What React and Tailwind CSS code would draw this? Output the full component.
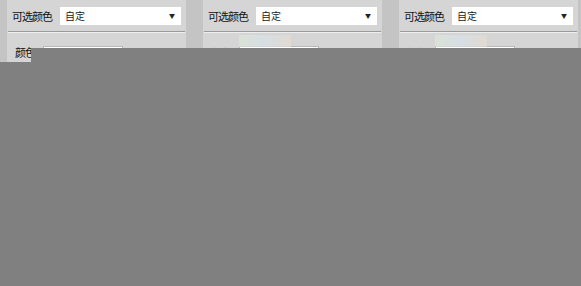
import React from 'react';

const panels = [
  { id: 1, swatch: 'bg-gradient-to-r from-[#e8a0a8] to-[#f4d0d4]', fill: 'w-[12px]', label: true, glow: false },
  { id: 2, swatch: 'bg-gradient-to-r from-[#7fc89a] via-[#6aa8d8] to-[#5b9fd6]', fill: 'w-[62px]', label: false, glow: true },
  { id: 3, swatch: 'bg-gradient-to-r from-[#2e8a78] via-[#3b8fb0] to-[#4a90c8]', fill: 'w-[62px]', label: false, glow: true },
];

function Panel({ p }) {
  return (
    <div className="w-[179px] h-full bg-[#d5d5d5] flex flex-col">
      <div className="flex items-center h-[24px] mt-[4px] pl-[5px] pr-[5px]">
        <span className="text-[11px] tracking-[-1px] leading-none text-[#111] w-[48px]">可选颜色</span>
        <div className="flex-1 h-[18px] bg-white flex items-center justify-between pl-[5px] pr-[6px]">
          <span className="text-[10px] leading-none text-[#222]">自定</span>
          <span className="text-[6px] leading-none text-[#222]">▼</span>
        </div>
      </div>
      <div className="mt-[3px] mx-[1px] h-[1px] bg-[#9a9a9a]" />
      <div className="mx-[1px] h-[1px] bg-[#eeeeee]" />
      <div className="relative h-[30px]">
        {p.glow && (
          <div className="absolute left-[36px] top-[2px] w-[52px] h-[12px] bg-gradient-to-r from-[#dce8d8] via-[#d8e2ea] to-[#e6dcd0] opacity-70" />
        )}
        <div className="flex items-center pl-[8px] pt-[13px]">
          <span className={`text-[11px] tracking-[-1px] leading-none text-[#111] w-[28px] ${p.label ? '' : 'opacity-10'}`}>颜色</span>
          <div className="w-[80px] h-[12px] bg-white border border-[#b8b8b8] p-[2px]">
            <div className={`h-full ${p.fill} ${p.swatch}`} />
          </div>
        </div>
      </div>
    </div>
  );
}

export default function App() {
  return (
    <div
      className="relative w-[581px] h-[286px] overflow-hidden bg-[#c4c4c4]"
      style={{ fontFamily: '"Noto Sans CJK SC", "Liberation Sans", sans-serif' }}
    >
      <div className="flex gap-[17px] pl-[7px] h-full">
        {panels.map((p) => (
          <Panel key={p.id} p={p} />
        ))}
      </div>
      <div className="absolute left-[31px] right-0 top-[48px] bottom-0 bg-[#808080]" />
      <div className="absolute left-0 right-0 top-[62px] bottom-0 bg-[#808080]" />
    </div>
  );
}
